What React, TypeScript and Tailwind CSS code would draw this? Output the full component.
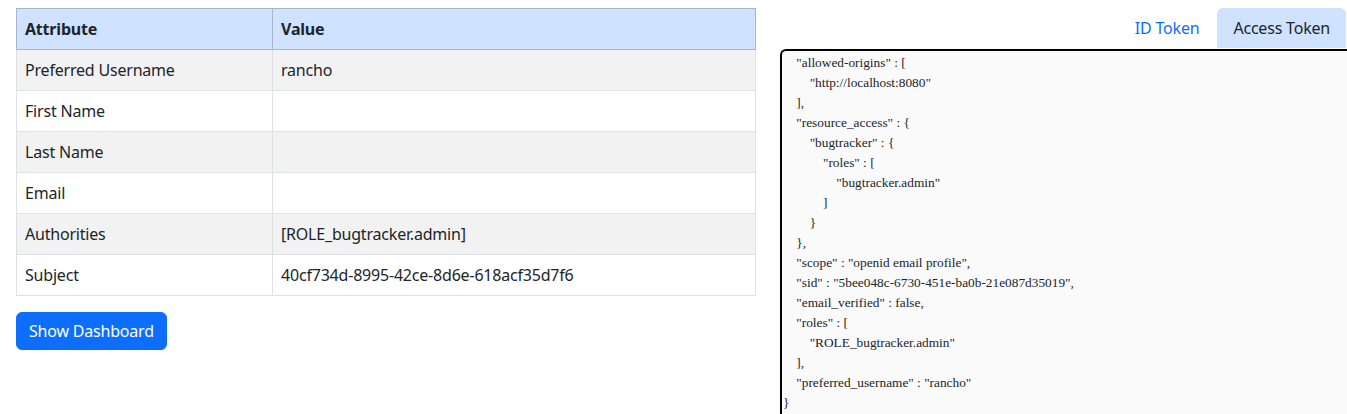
import React from "react";

const rows = [
  ["Preferred Username", "rancho"],
  ["First Name", ""],
  ["Last Name", ""],
  ["Email", ""],
  ["Authorities", "[ROLE_bugtracker.admin]"],
  ["Subject", "40cf734d-8995-42ce-8d6e-618acf35d7f6"],
];

const token = `    "allowed-origins" : [
        "http://localhost:8080"
    ],
    "resource_access" : {
        "bugtracker" : {
            "roles" : [
                "bugtracker.admin"
            ]
        }
    },
    "scope" : "openid email profile",
    "sid" : "5bee048c-6730-451e-ba0b-21e087d35019",
    "email_verified" : false,
    "roles" : [
        "ROLE_bugtracker.admin"
    ],
    "preferred_username" : "rancho"
}`;

export default function App() {
  return (
    <div className="flex h-[414px] overflow-hidden bg-white text-[#212529] font-['Noto_Sans',sans-serif] tracking-[-0.2px]">
      <div className="w-[780px] shrink-0 pl-4 pr-6 pt-2">
        <table className="w-full border-collapse text-base">
          <thead>
            <tr className="bg-[#cfe2ff]">
              <th className="w-[256px] border border-[#a6b5cc] px-2 py-2 text-left font-bold leading-6">Attribute</th>
              <th className="border border-[#a6b5cc] px-2 py-2 text-left font-bold leading-6">Value</th>
            </tr>
          </thead>
          <tbody>
            {rows.map(([k, v], i) => (
              <tr key={k} className={i % 2 === 0 ? "bg-[#f2f2f2]" : "bg-white"}>
                <td className="h-[41px] border border-[#dee2e6] px-2 py-2 leading-6">{k}</td>
                <td className="h-[41px] border border-[#dee2e6] px-2 py-2 leading-6">{v}</td>
              </tr>
            ))}
          </tbody>
        </table>
        <button className="mt-4 rounded-md border border-[#0d6efd] bg-[#0d6efd] px-3 py-1.5 text-base leading-6 text-white">
          Show Dashboard
        </button>
      </div>
      <div className="flex flex-1 flex-col pt-2">
        <div className="flex justify-end gap-[2px] pr-px">
          <span className="px-4 py-2 leading-6 text-[#0d6efd]">ID Token</span>
          <span className="rounded-t-md bg-[#cfe2ff] px-4 py-2 leading-6">Access Token</span>
        </div>
        <pre className="mt-px flex-1 rounded-tl-md border-2 border-r-0 border-b-0 border-black bg-[#fafafa] pl-px pt-[2px] font-['Liberation_Serif',serif] text-[13.333px] leading-5 tracking-normal whitespace-pre">
          {token}
        </pre>
      </div>
    </div>
  );
}
